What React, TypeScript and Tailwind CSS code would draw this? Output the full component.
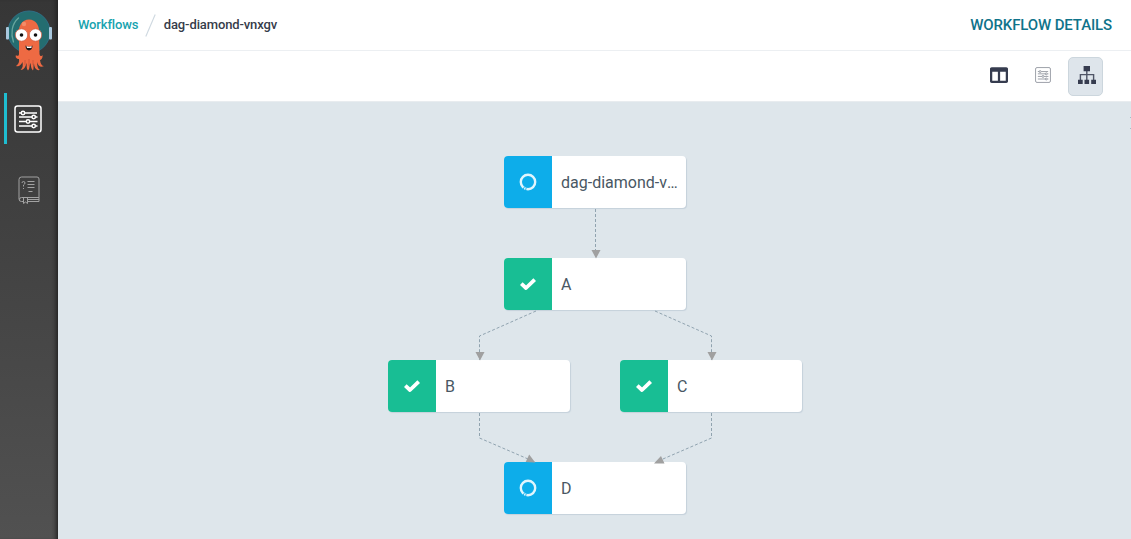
import React from "react";
import { FaColumns } from "react-icons/fa";

type Status = "running" | "done";

interface DagNode {
  label: string;
  status: Status;
  place: string;
}

const nodes: DagNode[] = [
  { label: "dag-diamond-vnxgv", status: "running", place: "left-[446px] top-[54px]" },
  { label: "A", status: "done", place: "left-[446px] top-[156px]" },
  { label: "B", status: "done", place: "left-[330px] top-[258px]" },
  { label: "C", status: "done", place: "left-[562px] top-[258px]" },
  { label: "D", status: "running", place: "left-[446px] top-[360px]" },
];

const edges = [
  "M537.5 107V156",
  "M478 209L421.5 234V258",
  "M597 209L653.5 234V258",
  "M421.5 311V336L477 360",
  "M653.5 311V336L598 360",
];

const arrows = [
  "M533.5 148h9l-4.5 8.500z",
  "M417.5 250h9l-4.5 8.500z",
  "M649.5 250h9l-4.5 8.500z",
  "M471.200 352.500l-3.500 7.500l9.500 .5z",
  "M603 354l3.500 7.500h-10.500z",
];

function Mascot() {
  return (
    <svg className="h-[64px] w-[50px]" viewBox="0 0 50 64" fill="none">
      <circle cx="25" cy="24" r="21" fill="#246d70" stroke="#2f6f86" strokeWidth="1" />
      <rect x="2" y="19" width="3" height="12.500" rx="1" fill="#a9c8de" />
      <rect x="45" y="19" width="3" height="12.500" rx="1" fill="#a9c8de" />
      <path d="M14.500 10C7.500 16 6.500 26 9.500 34" stroke="#68a69f" strokeWidth="1.300" strokeLinecap="round" />
      <path
        d="M15 26C14 18 18 11.500 25 11.500S36 18 35 26L35.500 46C36 49 38 48 38.500 47C39 51 36.500 52 36 52C36.500 56 38 58 40 58C37 60 34 58 33 54C33 58 34 61 36 62C32 63 30 59 30 55C29 58 30 61 29 62.500C27 61 27 58 26.500 55C25 58 26 61 24 62.500C22 60 23 57 22.500 55C21.500 59 20 62 16.500 62C19 60 19 57 18.500 54C17 57 15 59 12 58C14.500 56 15.500 54 15 51C12.500 51 11 49 12 47C13 48.500 15 48 15 46Z"
        fill="#ee6a43"
      />
      <path d="M21 52V57M25 51V58M29 52V57" stroke="#be4b32" strokeWidth=".6" />
      <circle cx="20" cy="16" r="2.200" fill="#f58c68" />
      <circle cx="17.500" cy="27" r="6.200" fill="#fff" stroke="#cf553a" strokeWidth=".7" />
      <circle cx="31.500" cy="27" r="6.200" fill="#fff" stroke="#cf553a" strokeWidth=".7" />
      <circle cx="17.500" cy="27" r="1.800" fill="#111" />
      <circle cx="31.500" cy="27" r="1.800" fill="#111" />
      <path d="M21.500 37.500Q25 40 28.500 37.500C28.500 44 21.500 44 21.500 37.500Z" fill="#161616" />
      <path d="M22.500 38Q25 39.500 27.500 38V40H23Z" fill="#fff" />
    </svg>
  );
}

function SlidersBox({ className, weight }: { className: string; weight: number }) {
  return (
    <svg className={className} viewBox="0 0 28 28" fill="none" stroke="currentColor" strokeWidth={weight}>
      <rect x="1" y="1" width="26" height="26" rx="2.500" />
      <path d="M5 8h2.500M11 8h12M5 12h13M21.500 12h2M5 16.500h7M16 16.500h7.500M5 21h13M21.500 21h2" />
      <circle cx="9" cy="8" r="1.700" />
      <circle cx="19.700" cy="12" r="1.700" />
      <circle cx="14" cy="16.500" r="1.700" />
      <circle cx="19.700" cy="21" r="1.700" />
    </svg>
  );
}

function HelpBook() {
  return (
    <svg className="h-7 w-[22px] text-[#a2a2a2]" viewBox="0 0 22 28" fill="none" stroke="currentColor" strokeWidth="1">
      <path d="M5 25.500H3.500Q1 25.500 1 23V3.500Q1 1 3.500 1H19Q21 1 21 3V21.500H3.500Q1.500 21.500 1.500 23.500M9.500 25.500H21V21.500M10 23.500H21" />
      <path d="M5.500 22V27.500L7.500 26L9.500 27.500V22" />
      <path d="M4 7Q4 5.500 5.500 5.500T7 7Q7 8 5.500 9V10.500M5.500 12v1M9.500 5.500h7M9.500 8.500h7M9.500 11.500h7M10.500 15.500h4" />
    </svg>
  );
}

function Tree() {
  return (
    <svg className="h-[18px] w-[18px]" viewBox="0 0 18 18">
      <path d="M5.600 0h6.400v5.300H5.600zM0 13.700h4.700V18H0zM6.500 13.700h4.600V18H6.500zM13.200 13.700H18V18h-4.800z" fill="currentColor" />
      <path d="M8.800 5v9M2.400 14V8.600h13.200V14" stroke="currentColor" strokeWidth="1.400" strokeOpacity=".85" fill="none" />
    </svg>
  );
}

function Check() {
  return (
    <svg className="h-[14px] w-[18px]" viewBox="0 0 18 14" fill="none">
      <path d="M2.300 6.700L7 11L15.700 2.700" stroke="#fff" strokeWidth="3.800" strokeLinejoin="round" />
    </svg>
  );
}

function Spinner() {
  return (
    <svg className="size-[18px]" viewBox="0 0 18 18" fill="none">
      <circle cx="9" cy="9" r="7.200" stroke="#fff" strokeOpacity=".88" strokeWidth="2.400" />
      <path d="M3.700 17L5.400 14M6.500 17.500L7.300 14.500" stroke="#0daeea" strokeWidth=".9" />
    </svg>
  );
}

function NodeCard({ node }: { node: DagNode }) {
  return (
    <div className={`absolute flex h-[52px] w-[182px] overflow-hidden rounded-[4px] bg-white shadow-[1px_1px_1px_#c5d1db] ${node.place}`}>
      <div className={`flex w-12 shrink-0 items-center justify-center text-white ${node.status === "done" ? "bg-[#18be94]" : "bg-[#0dadea]"}`}>
        {node.status === "done" ? <Check /> : <Spinner />}
      </div>
      <div className="min-w-0 flex-1 truncate pl-[9px] pr-2 text-[16px] leading-[53px] text-[#495763]">{node.label}</div>
    </div>
  );
}

export default function App() {
  return (
    <div className="flex h-[539px] w-full overflow-hidden bg-white font-['Roboto',sans-serif]">
      <aside className="flex w-[58px] shrink-0 flex-col bg-linear-to-b from-[#363636] to-[#515151] shadow-[inset_-5px_0_4px_-3px_#222]">
        <div className="flex h-[93px] justify-center pt-2">
          <Mascot />
        </div>
        <div className="ml-1 flex h-[51px] items-center border-l-[3px] border-[#1fbdd0] pl-[7px] text-white">
          <SlidersBox className="size-7" weight={1.5} />
        </div>
        <div className="mt-8 flex justify-center">
          <HelpBook />
        </div>
      </aside>

      <main className="flex min-w-0 flex-1 flex-col">
        <header className="flex h-[51px] shrink-0 items-center border-b border-[#eceff2] pl-5 pr-[19px] font-medium">
          <span className="text-[13px] leading-5 tracking-[-0.15px] text-[#18a3af]">Workflows</span>
          <svg className="ml-[7px] mr-[7.500px] h-[23px] w-[11px]" viewBox="0 0 11 23">
            <path d="M.8 22.500L10.200.5" stroke="#ced8e0" strokeWidth="1.100" />
          </svg>
          <span className="text-[13px] leading-5 tracking-[-0.12px] text-[#363c4a]">dag-diamond-vnxgv</span>
          <h1 className="ml-auto text-[15px] leading-5 tracking-[-0.13px] text-[#0f738a]">WORKFLOW DETAILS</h1>
        </header>

        <div className="flex h-[51px] shrink-0 items-center justify-end border-b border-[#e8ecef] pr-7 text-[#363c4f]">
          <FaColumns className="mr-[27px] size-[18px] -translate-y-px" />
          <SlidersBox className="mr-[17px] size-4 -translate-y-px text-[#8d929b]" weight={1.5} />
          <div className="flex h-[39px] w-[35px] items-center justify-center rounded-[5px] border border-[#ccd6dd] bg-[#dee5eb] pb-[3px] pl-[2px]">
            <Tree />
          </div>
        </div>

        <section className="relative flex-1 overflow-hidden bg-[#dee6eb]">
          {nodes.map((node) => (
            <NodeCard key={node.label} node={node} />
          ))}
          <svg className="absolute left-0 top-0 h-[437px] w-[1073px]" viewBox="0 0 1073 437" fill="none">
            {edges.map((d) => (
              <path key={d} d={d} stroke="#879ba8" strokeWidth=".9" strokeDasharray="3 2" />
            ))}
            {arrows.map((d) => (
              <path key={d} d={d} fill="#a0a0a0" />
            ))}
            <path d="M1072.500 15v1M1072.500 26v1" stroke="#aab9c5" />
          </svg>
        </section>
      </main>
    </div>
  );
}
